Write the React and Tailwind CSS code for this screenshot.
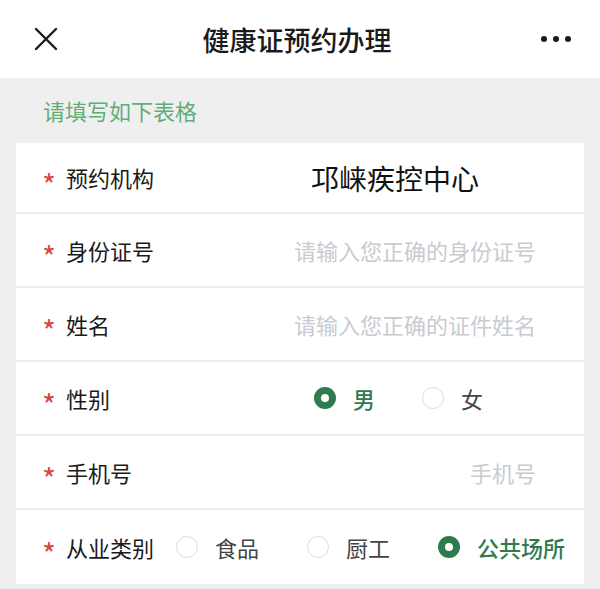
import React from 'react';

const font = { fontFamily: '"Noto Sans CJK SC", "Noto Sans", sans-serif' };

const Star = () => <span className="text-[#d9473f] text-[30px] w-[24px] leading-none mt-[12px] -ml-[1px]">*</span>;

const Radio = ({ checked, label }) => (
  <div className="flex items-center">
    {checked ? (
      <span className="w-[22px] h-[22px] rounded-full bg-[#2f7a4e] flex items-center justify-center">
        <span className="w-[8px] h-[8px] rounded-full bg-white" />
      </span>
    ) : (
      <span className="w-[22px] h-[22px] rounded-full border border-[#dcdcdc] bg-white" />
    )}
    <span className={`ml-[17px] text-[22px] ${checked ? 'text-[#2f7a4e] font-medium' : 'text-[#444]'}`}>{label}</span>
  </div>
);

const Row = ({ label, children, last }) => (
  <div className={`h-[74px] flex items-center pl-[27px] pr-[48px] ${last ? '' : 'border-b-2 border-[#ececec]'}`}>
    <Star />
    <span className="text-[22px] text-[#1a1a1a]">{label}</span>
    <div className="flex-1 flex justify-end items-center">{children}</div>
  </div>
);

const App = () => {
  return (
    <div className="w-[600px] h-[589px] bg-[#efefef] overflow-hidden" style={font}>
      {/* header */}
      <div className="h-[78px] bg-white flex items-center px-[33px] relative">
        <svg width="26" height="26" viewBox="0 0 26 26">
          <path d="M3 3 L23 23 M23 3 L3 23" stroke="#1a1a1a" strokeWidth="2.4" strokeLinecap="round" />
        </svg>
        <div className="flex-1 text-center text-[27px] font-medium text-[#1a1a1a] ml-[-6px] mt-[3px]">健康证预约办理</div>
        <div className="flex gap-[6px] mr-[-4px]">
          <span className="w-[6px] h-[6px] rounded-full bg-[#1a1a1a]" />
          <span className="w-[6px] h-[6px] rounded-full bg-[#1a1a1a]" />
          <span className="w-[6px] h-[6px] rounded-full bg-[#1a1a1a]" />
        </div>
      </div>

      <div className="h-[65px] flex items-center pl-[43px] text-[22px] text-[#5fae78]">请填写如下表格</div>

      <div className="mx-[16px] bg-white">
        <div className="h-[71px] flex items-center pl-[27px] border-b-2 border-[#ececec]">
          <Star />
          <span className="text-[22px] text-[#1a1a1a]">预约机构</span>
          <span className="ml-[157px] text-[28px] text-[#111]">邛崃疾控中心</span>
        </div>
        <div className="rounded-t-[10px]">
          <Row label="身份证号">
            <span className="text-[22px] text-[#c8cbd0]">请输入您正确的身份证号</span>
          </Row>
          <Row label="姓名">
            <span className="text-[22px] text-[#c8cbd0]">请输入您正确的证件姓名</span>
          </Row>
          <Row label="性别">
            <div className="flex gap-[47px] mr-[53px]">
              <Radio checked label="男" />
              <Radio label="女" />
            </div>
          </Row>
          <Row label="手机号">
            <span className="text-[22px] text-[#c8cbd0]">手机号</span>
          </Row>
          <div className="h-[74px] flex items-center pl-[27px]">
            <Star />
            <span className="text-[22px] text-[#1a1a1a]">从业类别</span>
            <div className="ml-[22px] flex gap-[48px]">
              <Radio label="食品" />
              <Radio label="厨工" />
              <Radio checked label="公共场所" />
            </div>
          </div>
        </div>
      </div>
    </div>
  );
};

export default App;
